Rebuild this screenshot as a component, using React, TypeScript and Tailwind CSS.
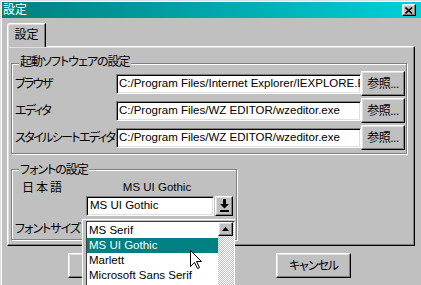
import type { ReactNode } from "react";

const raised =
  "border border-t-white border-l-white border-r-black border-b-black bg-[#c0c0c0] shadow-[inset_-1px_-1px_#808080,inset_1px_1px_#dfdfdf]";
const sunken =
  "border border-t-[#808080] border-l-[#808080] border-r-white border-b-white bg-white shadow-[inset_1px_1px_#000,inset_-1px_-1px_#dfdfdf]";
// proportional kana, as MS UI Gothic sets them
const kana = "[font-feature-settings:'palt'] whitespace-nowrap";

function GroupBox({
  title,
  titleTop,
  className,
  children,
}: {
  title: string;
  titleTop: string;
  className: string;
  children: ReactNode;
}) {
  return (
    <div
      className={`relative border border-[#808080] shadow-[inset_1px_1px_#fff,1px_1px_#fff] ${className}`}
    >
      <span
        className={`absolute left-[7px] bg-[#c0c0c0] px-px text-[12px] leading-[13px] tracking-[-1px] ${kana} ${titleTop}`}
      >
        {title}
      </span>
      {children}
    </div>
  );
}

function PathRow({ label, value }: { label: string; value: string }) {
  return (
    <div className="flex h-[25px] items-center">
      <span className={`w-[104px] pl-[3px] text-[12px] leading-[14px] tracking-[-1.6px] ${kana}`}>
        {label}
      </span>
      <div
        className={`flex h-[20px] w-[245px] shrink-0 items-center overflow-hidden pl-[2px] text-[11.5px] whitespace-nowrap ${sunken}`}
      >
        <span className="min-w-0 overflow-hidden">{value}</span>
      </div>
      <button
        type="button"
        className={`h-[25px] w-[44px] shrink-0 text-[12px] leading-none tracking-[-0.5px] ${raised}`}
      >
        参照...
      </button>
    </div>
  );
}

function DropArrow() {
  return (
    <svg width="9" height="14" viewBox="0 0 9 14" fill="#000">
      <rect x="3" y="0" width="3" height="5" />
      <polygon points="0,5 9,5 4.5,9.5" />
      <rect x="0" y="11" width="9" height="2" />
    </svg>
  );
}

function Cursor() {
  return (
    <svg width="13" height="20" viewBox="0 0 13 20" className="absolute top-[249px] left-[189px]">
      <polygon
        points="0.5,0.5 0.5,16.5 4.5,12.5 7.5,18.5 9.5,17.5 6.5,11.5 11.5,11.5"
        fill="#fff"
        stroke="#000"
        strokeWidth="1"
      />
    </svg>
  );
}

const fonts = ["MS Serif", "MS UI Gothic", "Marlett", "Microsoft Sans Serif"];

export default function App() {
  return (
    <div className="relative flex h-[285px] w-[421px] flex-col overflow-hidden border-t border-l border-[#dfdfdf] bg-[#c0c0c0] font-['Liberation_Sans','Noto_Sans_CJK_JP',sans-serif] leading-none text-black shadow-[inset_1px_1px_#fff]">
      {/* title bar */}
      <div className="mt-px ml-px flex h-[16px] items-center justify-between bg-gradient-to-r from-[#008080] to-[#00d0d8]">
        <span className="pl-px text-[12px] leading-[14px] text-white">設定</span>
        <button
          type="button"
          aria-label="閉じる"
          className={`mr-[5px] flex h-[12px] w-[14px] items-center justify-center ${raised}`}
        >
          <svg width="8" height="7" viewBox="0 0 8 7">
            <path d="M0.5 0.5 L7 6.5 M7 0.5 L0.5 6.5" stroke="#000" strokeWidth="1.6" />
          </svg>
        </button>
      </div>

      {/* tab control */}
      <div className="mt-[5px] ml-[6px] flex flex-col">
        <div className="flex">
          <div className="relative z-10 -mb-px flex h-[24px] w-[39px] items-center justify-center rounded-tl-[3px] border-t border-r border-l border-t-white border-r-black border-l-white bg-[#c0c0c0] pb-px text-[12px] shadow-[inset_-1px_0_#808080,inset_1px_1px_#dfdfdf]">
            設定
          </div>
        </div>
        <div className="flex h-[200px] w-[408px] flex-col border border-t-white border-r-black border-b-black border-l-white pt-[16px] pl-[3px] shadow-[inset_-1px_-1px_#808080,inset_1px_1px_#dfdfdf]">
          <GroupBox
            title="起動ソフトウェアの設定"
            titleTop="-top-[8px]"
            className="flex h-[91px] w-[396px] flex-col gap-[2px] pt-[7px]"
          >
            <PathRow label="ブラウザ" value="C:/Program Files/Internet Explorer/IEXPLORE.EXE" />
            <PathRow label="エディタ" value="C:/Program Files/WZ EDITOR/wzeditor.exe" />
            <PathRow label="スタイルシートエディタ" value="C:/Program Files/WZ EDITOR/wzeditor.exe" />
          </GroupBox>

          <GroupBox
            title="フォントの設定"
            titleTop="-top-[6px]"
            className="mt-[15px] flex h-[71px] w-[226px] flex-col pt-[11px]"
          >
            <div className="flex h-[14px] items-center">
              <span className="w-[74px] pl-[10px] text-[12px] tracking-[2px]">日本語</span>
              <span className="w-[142px] text-center text-[11.5px]">MS UI Gothic</span>
            </div>
            <div className="mt-px ml-[74px] flex items-center gap-px">
              <div className={`flex h-[20px] w-[128px] items-center pl-[3px] text-[11.5px] ${sunken}`}>
                MS UI Gothic
              </div>
              <button
                type="button"
                className={`flex h-[20px] w-[18px] items-center justify-center ${raised}`}
              >
                <DropArrow />
              </button>
            </div>
            <div className={`mt-[6px] flex h-[14px] items-center pl-[3px] text-[12px] tracking-[-1px] ${kana}`}>
              フォントサイズ
            </div>
          </GroupBox>
        </div>
      </div>

      {/* dialog buttons */}
      <div className="mt-[7px] flex">
        <button type="button" className={`ml-[67px] h-[25px] w-[75px] text-[12px] ${raised}`}>
          OK
        </button>
        <button
          type="button"
          className={`ml-[133px] h-[25px] w-[75px] text-[12px] tracking-[-1px] ${kana} ${raised}`}
        >
          キャンセル
        </button>
      </div>

      {/* open font list */}
      <div className="absolute top-[218px] left-[81px] flex h-[80px] w-[153px] border-t border-l border-white bg-[#c0c0c0] pt-px pl-[3px]">
        <div className="flex flex-1 border-t border-r border-l border-t-[#404040] border-r-white border-l-[#404040] bg-white">
          <ul className="m-0 flex-1 list-none p-0 pt-px">
            {fonts.map((name) => (
              <li
                key={name}
                className={`flex h-[15px] items-center pl-[2px] text-[11.5px] whitespace-nowrap ${
                  name === "MS UI Gothic" ? "bg-[#008080] text-white" : ""
                }`}
              >
                {name}
              </li>
            ))}
          </ul>
          <div className="flex w-[16px] flex-col bg-[repeating-conic-gradient(#c0c0c0_0%_25%,#ffffff_0%_50%)] bg-size-[2px_2px]">
            <div className={`flex h-[14px] w-[15px] items-center justify-center ${raised}`}>
              <svg width="7" height="4" viewBox="0 0 7 4">
                <polygon points="3.5,0 7,4 0,4" fill="#000" />
              </svg>
            </div>
          </div>
        </div>
      </div>

      <Cursor />
    </div>
  );
}
